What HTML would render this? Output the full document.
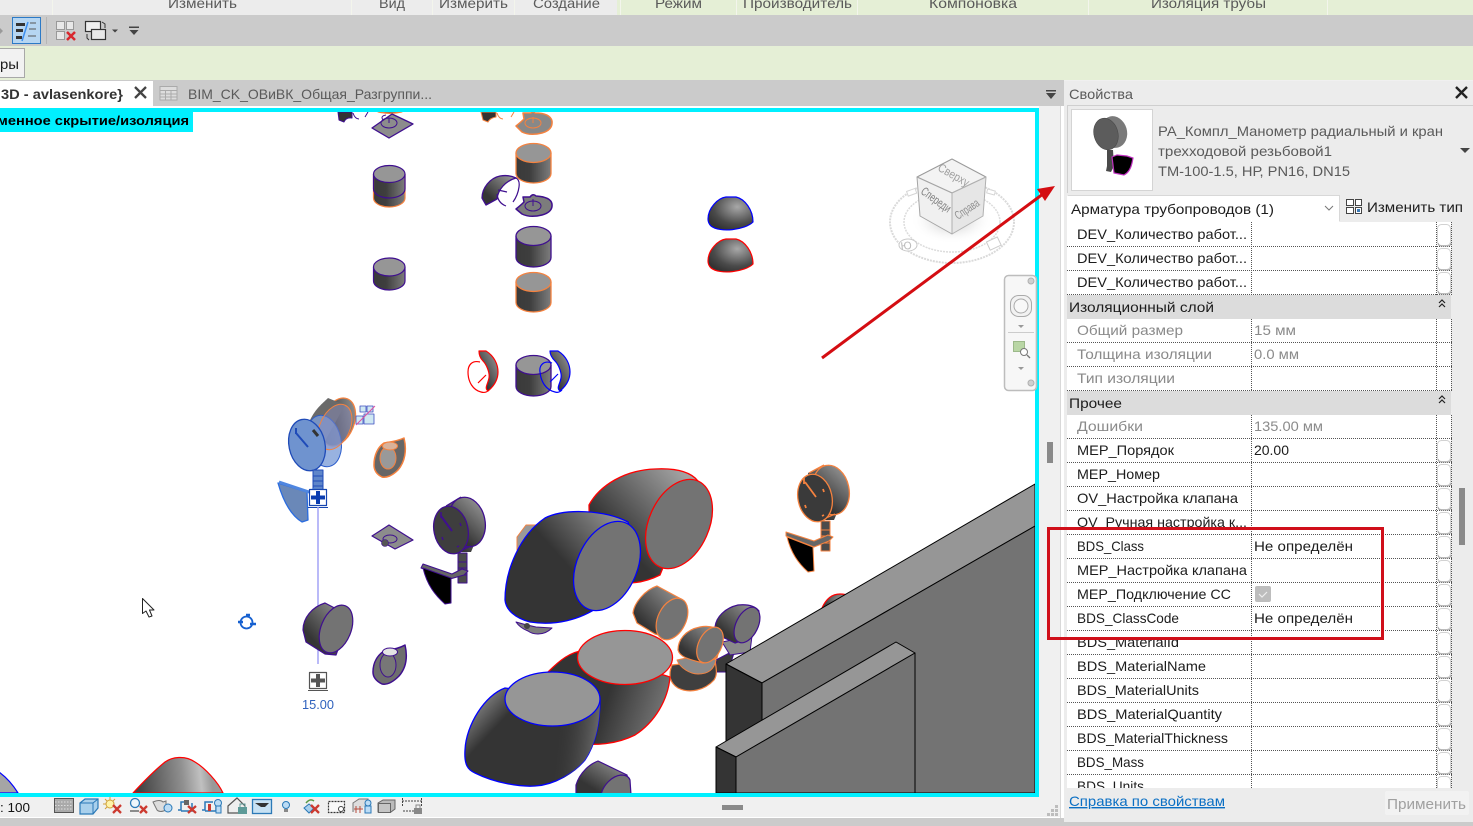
<!DOCTYPE html>
<html lang="ru"><head><meta charset="utf-8"><title>Свойства</title>
<style>
html,body{margin:0;padding:0;background:#fff;overflow:hidden}
svg{display:block}
text{font-family:"Liberation Sans","Noto Sans CJK SC",sans-serif;font-size:14px;fill:#1c1c1c}
.r{fill:#5a5a5a}.g{fill:#8a8a8a}
</style></head><body>
<svg width="1473" height="826" viewBox="0 0 1473 826" xmlns="http://www.w3.org/2000/svg">
<defs>
<linearGradient id="cy" x1="0" x2="1" y1="0" y2="0"><stop offset="0" stop-color="#3a3a3a"/><stop offset=".4" stop-color="#3e3e3e"/><stop offset="1" stop-color="#7d7d7d"/></linearGradient>
<linearGradient id="ti" x1="0" x2="1" y1="1" y2="0"><stop offset=".25" stop-color="#353535"/><stop offset="1" stop-color="#a0a0a0"/></linearGradient>
<linearGradient id="bb" gradientUnits="userSpaceOnUse" x1="530" y1="600" x2="625" y2="515"><stop offset=".4" stop-color="#343434"/><stop offset="1" stop-color="#9a9a9a"/></linearGradient>
<linearGradient id="br" gradientUnits="userSpaceOnUse" x1="605" y1="540" x2="680" y2="470"><stop offset=".1" stop-color="#343434"/><stop offset="1" stop-color="#a2a2a2"/></linearGradient>
<linearGradient id="lr" gradientUnits="userSpaceOnUse" x1="590" y1="700" x2="665" y2="725"><stop offset=".2" stop-color="#343434"/><stop offset="1" stop-color="#7a7a7a"/></linearGradient>
<linearGradient id="lo" gradientUnits="userSpaceOnUse" x1="555" y1="740" x2="600" y2="745"><stop offset="0" stop-color="#343434" stop-opacity="0"/><stop offset="1" stop-color="#707070"/></linearGradient>
<linearGradient id="lb2" gradientUnits="userSpaceOnUse" x1="510" y1="725" x2="478" y2="695"><stop offset=".2" stop-color="#343434"/><stop offset="1" stop-color="#8d8d8d"/></linearGradient>
<radialGradient id="do" cx=".65" cy=".3" r=".75"><stop offset="0" stop-color="#a8a8a8"/><stop offset=".7" stop-color="#4a4a4a"/><stop offset="1" stop-color="#333"/></radialGradient>
<linearGradient id="dr" gradientUnits="userSpaceOnUse" x1="140" y1="790" x2="212" y2="782"><stop offset="0" stop-color="#444"/><stop offset=".6" stop-color="#909090"/><stop offset=".85" stop-color="#c0c0c0"/><stop offset="1" stop-color="#999"/></linearGradient>
<radialGradient id="sh" cx=".5" cy=".5" r=".5"><stop offset="0" stop-color="#bdbdbd"/><stop offset="1" stop-color="#fff" stop-opacity="0"/></radialGradient>
<clipPath id="vp"><rect x="0" y="112" width="1035" height="681"/></clipPath>
<clipPath id="tb"><rect x="1067" y="222" width="385" height="566"/></clipPath>
<g id="bt"><rect x="1437.500" y="1.500" width="13" height="21" rx="4" fill="#fff" stroke="#d2d2d2"/><path d="M1438 20q0 3 4 3h5q4 0 4-3" fill="none" stroke="#a5a5a5"/></g>
</defs>

<!-- chrome -->
<rect width="1473" height="826" fill="#f0f0f0"/>
<rect y="0" width="617" height="15" fill="#ececec"/>
<rect x="617" y="0" width="856" height="15" fill="#e5efd6"/>
<path d="M52.500 0V15M351.500 0V15M432.500 0V15M514.500 0V15M620.500 0V15M736.500 0V15M857.500 0V15M1088.500 0V15M1327.500 0V15" stroke="#f3f5ec"/>
<text class="r" x="168" y="8" textLength="69" lengthAdjust="spacingAndGlyphs">Изменить</text>
<text class="r" x="379" y="8" textLength="26" lengthAdjust="spacingAndGlyphs">Вид</text>
<text class="r" x="439" y="8" textLength="69" lengthAdjust="spacingAndGlyphs">Измерить</text>
<text class="r" x="533" y="8" textLength="67" lengthAdjust="spacingAndGlyphs">Создание</text>
<text class="r" x="655" y="8" textLength="47" lengthAdjust="spacingAndGlyphs">Режим</text>
<text class="r" x="743" y="8" textLength="109" lengthAdjust="spacingAndGlyphs">Производитель</text>
<text class="r" x="929" y="8" textLength="88" lengthAdjust="spacingAndGlyphs">Компоновка</text>
<text class="r" x="1151" y="8" textLength="115" lengthAdjust="spacingAndGlyphs">Изоляция трубы</text>
<rect y="15" width="1473" height="31" fill="#cbcbcb"/>
<rect y="46" width="1473" height="34" fill="#e5efd6"/>
<rect x="-2" y="48.500" width="26.500" height="29" fill="#f2f2f2" stroke="#a8a8a8"/>
<text x="0" y="69" textLength="19" lengthAdjust="spacingAndGlyphs">ры</text>
<!-- toolbar icons -->
<path d="M0 28l3 3-3 3z" fill="#999"/>
<rect x="12.500" y="17.500" width="28" height="26" fill="#b6d6f2" stroke="#2c7ac6"/>
<path d="M16 23h9v3h-9zM16 29h7v3h-7zM16 36h6v3h-6z" fill="#333"/><path d="M30 23h6M29 29h7M28 36h8" stroke="#555"/><path d="M28 22l-6 19" stroke="#3c8ff0" stroke-width="1.500"/>
<path d="M46.500 17V44" stroke="#b5b5b5"/>
<rect x="56.500" y="21.500" width="8" height="8" fill="#e8e8e8" stroke="#999"/><rect x="66.500" y="21.500" width="7" height="8" fill="#e8e8e8" stroke="#999"/><rect x="56.500" y="31.500" width="8" height="8" fill="#e8e8e8" stroke="#999"/>
<path d="M67 32l8 8M75 32l-8 8" stroke="#d9272e" stroke-width="2.500"/>
<rect x="85.500" y="21.500" width="15" height="10" fill="#eee" stroke="#333" stroke-width="1.200"/><rect x="91.500" y="29.500" width="14" height="10" fill="#e8e8e8" stroke="#333" stroke-width="1.200"/>
<path d="M102 22l3 2v4M87 34v4l2 2" fill="none" stroke="#333"/>
<path d="M112 29.500h6l-3 3zM129 26.500h10v1.500h-10zM129.500 30h9l-4.500 5z" fill="#444"/>

<!-- tabs -->
<rect y="80" width="1064" height="26" fill="#cbcbcb"/>
<rect y="81" width="153" height="25" fill="#fff"/>
<text x="1" y="99" textLength="122" lengthAdjust="spacingAndGlyphs" style="font-weight:bold;fill:#333">3D - avlasenkore}</text>
<path d="M135 87l11 11M146 87l-11 11" stroke="#444" stroke-width="2.300"/>
<rect x="160" y="86.500" width="17" height="13.500" fill="#ddd" stroke="#aaa"/><path d="M160 90.500h17M160 94h17M160 97h17M165.500 90v10M171 90v10" stroke="#aaa"/>
<text class="r" x="188" y="99" textLength="244" lengthAdjust="spacingAndGlyphs">BIM_CK_ОВиВК_Общая_Разгруппи...</text>
<path d="M1046 90h10v1.500h-10zM1046 93h10l-5 6z" fill="#444"/>

<!-- viewport -->
<rect x="0" y="106" width="1061" height="2" fill="#fff"/>
<rect x="1039" y="106" width="22" height="692" fill="#f0f0f0"/>
<rect x="0" y="112" width="1035" height="681" fill="#fff"/>
<rect x="1047" y="442" width="6" height="21" fill="#8a8a8a"/>
<g clip-path="url(#vp)" stroke-linejoin="round">
<!-- top fragments -->
<path d="M338 112h14v6q-6-1-8 4l-5-2z" fill="#333" stroke="#3f0f8f"/><path d="M353 113q2 6 6 6M368 112l-3 5" fill="none" stroke="#3f0f8f"/>
<path d="M481 112h15v5q-6 1-8 5l-5-2z" fill="#333" stroke="#f5823f"/><path d="M497 113q2 6 6 6M514 112l-3 5" fill="none" stroke="#f5823f"/>
<path d="M378 112q12 3 24 0z" fill="#555" stroke="#f5823f"/>
<path d="M372 128l20-14 21 10-24 14z" fill="#8c8c8c" stroke="#3f0f8f" stroke-width="1.300"/><ellipse cx="389" cy="123" rx="8" ry="5" fill="none" stroke="#3f0f8f"/><path d="M389 118v5M383 120q-3-4 3-5" fill="none" stroke="#3f0f8f"/>
<path d="M516 126q5-4 8-7l-1-6h8q2-2 4 0 15 0 17 8 1 9-10 12-12 3-20-1z" fill="#888" stroke="#f5823f" stroke-width="1.500"/><ellipse cx="533" cy="123" rx="8" ry="5" fill="none" stroke="#f5823f"/><path d="M533 117v6" stroke="#f5823f"/>
<path d="M516 209q5-4 8-7l-1-5h7q3-4 6-1 15 1 16 8 1 8-10 11-12 3-20-1z" fill="#7c7c7c" stroke="#3f0f8f" stroke-width="1.500"/><ellipse cx="533" cy="206" rx="8" ry="5" fill="none" stroke="#3f0f8f"/><path d="M533 199v7" stroke="#3f0f8f"/>
<!-- halves -->
<path d="M486 205l-4-7C482 188 490 178 500 176 506 175 512 176 516 178 505 181 498 190 497 199Z" fill="url(#ti)" stroke="#3f0f8f" stroke-width="1.300"/>
<path d="M516 178q4 2 3 9-1 8-6 15M506 206q-8-3-9-12M498 190l9 2" fill="none" stroke="#3f0f8f" stroke-width="1.200"/>
<!-- cylinders -->
<path d="M373.500 174V198A15.750 9 0 0 0 405 198V174Z" fill="url(#cy)" stroke="#f5823f" stroke-width="1.200"/>
<path d="M373.500 174V189A15.750 9 0 0 0 405 189V174" fill="none" stroke="#3f0f8f" stroke-width="1.200"/>
<ellipse cx="389.250" cy="174" rx="15.750" ry="8.500" fill="#969696" stroke="#3f0f8f" stroke-width="1.200"/>
<path d="M373.500 267V281A15.750 9 0 0 0 405 281V267Z" fill="url(#cy)" stroke="#3f0f8f" stroke-width="1.200"/><ellipse cx="389.250" cy="267" rx="15.750" ry="9" fill="#969696" stroke="#3f0f8f" stroke-width="1.200"/>
<path d="M516 153V173.500A17.500 9.500 0 0 0 551 173.500V153Z" fill="url(#cy)" stroke="#f5823f" stroke-width="1.300"/><ellipse cx="533.500" cy="153" rx="17.500" ry="9.500" fill="#969696" stroke="#f5823f" stroke-width="1.300"/>
<path d="M516 236V257.500A17.500 9.500 0 0 0 551 257.500V236Z" fill="url(#cy)" stroke="#3f0f8f" stroke-width="1.300"/><ellipse cx="533.500" cy="236" rx="17.500" ry="9.500" fill="#969696" stroke="#3f0f8f" stroke-width="1.300"/>
<path d="M516 282V302.500A17.500 9.500 0 0 0 551 302.500V282Z" fill="url(#cy)" stroke="#f5823f" stroke-width="1.300"/><ellipse cx="533.500" cy="282" rx="17.500" ry="9.500" fill="#969696" stroke="#f5823f" stroke-width="1.300"/>
<path d="M516 365V386.500A17.500 9.500 0 0 0 551 386.500V365Z" fill="url(#cy)" stroke="#3f0f8f" stroke-width="1.300"/><ellipse cx="533.500" cy="365" rx="17.500" ry="9.500" fill="#969696" stroke="#3f0f8f" stroke-width="1.300"/>
<!-- crescents -->
<path d="M479 351h7C494 356 498 364 498 372 498 380 494 386 488 391 484 388 488 384 489 378 490 372 486 364 483 361 480 358 479 355 479 351Z" fill="url(#ti)" stroke="#f00" stroke-width="1.200"/>
<path d="M480 362C472 360 468 365 468 372 468 382 473 390 481 392 484 393 487 392 489 390M478 383l8-8" fill="none" stroke="#f00" stroke-width="1.200"/>
<path d="M550 351h8C566 356 570 364 570 372 570 380 566 386 560 391 556 388 560 384 561 378 562 372 558 364 555 361 552 358 550 355 550 351Z" fill="url(#ti)" stroke="#00f" stroke-width="1.200"/>
<path d="M552 363C544 360 539 365 540 372 541 382 546 390 555 392 558 393 560 392 562 390M550 382l8-8" fill="none" stroke="#00f" stroke-width="1.200"/>
<!-- domes -->
<path d="M708 219C708 208 718 198 726 197L736 197C745 199 753 210 753 222 745 230 720 233 711 226 709 224 708 222 708 219Z" fill="url(#do)" stroke="#00f" stroke-width="1.200"/>
<path d="M708 261C708 250 718 240 726 239L736 239C745 241 753 252 753 264 745 272 720 275 711 268 709 266 708 264 708 261Z" fill="url(#do)" stroke="#f00" stroke-width="1.200"/>
<!-- selected manometer -->
<ellipse cx="338" cy="422" rx="16" ry="25" transform="rotate(22 338 422)" fill="url(#ti)" stroke="#f5823f" stroke-width="1.300"/>
<path d="M310 420C316 408 322 404 328 398L345 405 320 450Z" fill="#6a6a6a"/>
<ellipse cx="324" cy="441" rx="17" ry="26" transform="rotate(-12 324 441)" fill="#7e9fd8" fill-opacity=".8" stroke="#2a5ccc"/>
<ellipse cx="335" cy="427" rx="15" ry="24" transform="rotate(25 335 427)" fill="#8a8ec0" fill-opacity=".45" stroke="#f5823f"/>
<ellipse cx="307" cy="445" rx="18" ry="26" transform="rotate(-12 307 445)" fill="#6f93cf" stroke="#1f4bb8" stroke-width="1.300"/>
<path d="M296 433l12 14M296 428v6" stroke="#1f4bb8" stroke-width="2"/><path d="M313 430l5 6" stroke="#333" stroke-width="3"/>
<path d="M313 470h10v20h-10z" fill="#5f86c9" stroke="#1f4bb8"/><path d="M313 476h10M313 481h10M313 486h10" stroke="#1f4bb8"/>
<path d="M278 483l29 9 1 28-6 2C292 516 284 504 278 483Z" fill="#6a88b8" stroke="#2a6ce0" stroke-width="1.300"/>
<path d="M279 482l30 10 6-3" fill="none" stroke="#4f86e0" stroke-width="3"/>
<rect x="309.500" y="489.500" width="17" height="16" fill="#fff" stroke="#1746b0" stroke-width="1.200"/><path d="M318 491v13M311 497.500h14" stroke="#0a3cb0" stroke-width="4"/><path d="M308 507.500h20" stroke="#1746b0"/>
<path d="M318 507V664" stroke="#a3a3f5" stroke-width="1.500"/>
<rect x="309.500" y="672.500" width="17" height="16" fill="#fff" stroke="#555" stroke-width="1.200"/><path d="M318 674v13M311 680.500h14" stroke="#555" stroke-width="4"/><path d="M308 690.500h20" stroke="#555"/>
<text x="302" y="709" textLength="32" lengthAdjust="spacingAndGlyphs" style="font-size:13px;fill:#2f62bd">15.00</text>
<g stroke="#3e4fc0" fill="#cfe8f2" stroke-width=".8"><rect x="360" y="406" width="6" height="6"/><rect x="367" y="406" width="6" height="6"/><rect x="356" y="416" width="7" height="8"/><rect x="364" y="414" width="10" height="10"/></g><path d="M356 425l19-19" stroke="#e050a0"/>
<!-- orange plate -->
<path d="M374 465C374 455 378 447 384 443 390 442 398 441 404 438 407 450 405 462 398 470 392 476 386 478 382 477 376 474 374 470 374 465Z" fill="#666" stroke="#f5823f" stroke-width="1.500"/>
<ellipse cx="388" cy="458" rx="8" ry="11" fill="#999" stroke="#f5823f"/><ellipse cx="390" cy="446" rx="7.500" ry="4" fill="#d9b29a" stroke="#f5823f"/>
<!-- diamond 2 -->
<path d="M372 536l17-11 24 15-18 9z" fill="#8c8c8c" stroke="#3f0f8f" stroke-width="1.200"/><ellipse cx="390" cy="539" rx="7" ry="4" fill="none" stroke="#3f0f8f"/><circle cx="385" cy="543" r="3.500" fill="#555" stroke="#3f0f8f" stroke-width=".6"/>
<!-- purple manometer -->
<path d="M445 507L461 497 484 522 471 552 451 552Z" fill="url(#ti)"/>
<ellipse cx="467" cy="522" rx="18" ry="25" transform="rotate(-12 467 522)" fill="url(#ti)" stroke="#3f0f8f" stroke-width="1.300"/>
<path d="M446 506L461 497M455 553L471 546" stroke="#3f0f8f" stroke-width="1.300"/>
<ellipse cx="451" cy="530" rx="17" ry="24" transform="rotate(-12 451 530)" fill="#3e3e3e" stroke="#3f0f8f" stroke-width="1.300"/>
<path d="M441 516l11 15" stroke="#3f0f8f" stroke-width="2"/><path d="M441 512v6M460 523l1 3M442 537l1 3M457 547l2-1" stroke="#3f0f8f" stroke-width="1.500"/>
<path d="M458 553h9v30h-9z" fill="#4b4b4b" stroke="#3f0f8f"/><path d="M458 562h9M458 568h9M458 575h9" stroke="#3f0f8f"/>
<path d="M423 564l29 10 10-5 6 2-4 4-14 4-29-11z" fill="#666" stroke="#3f0f8f"/>
<path d="M423 568L451 578V603L445 604C435 595 427 585 423 568Z" fill="#000" stroke="#3f0f8f"/>
<!-- purple tilted cylinder -->
<path d="M303 630C303 618 312 607 325 603L350 616 336 655 325 654 306 642Z" fill="url(#ti)" stroke="#3f0f8f" stroke-width="1.200"/>
<ellipse cx="336" cy="629" rx="15" ry="25" transform="rotate(22 336 629)" fill="#737373" stroke="#3f0f8f" stroke-width="1.200"/>
<path d="M373 672C373 662 378 655 384 651 390 650 398 649 405 645 408 658 406 668 399 676 393 682 387 685 382 684 376 681 373 677 373 672Z" fill="#6e6e6e" stroke="#3f0f8f" stroke-width="1.500"/>
<ellipse cx="388" cy="665" rx="8" ry="12" fill="#777" stroke="#3f0f8f"/><ellipse cx="390" cy="652" rx="7.500" ry="4" fill="#e4e4e4" stroke="#3f0f8f"/>
<!-- orange manometer -->
<path d="M808 473L824 465 847 490 834 520 815 520Z" fill="url(#ti)"/>
<ellipse cx="831" cy="490" rx="18" ry="25" transform="rotate(-12 831 490)" fill="url(#ti)" stroke="#f5823f" stroke-width="1.300"/>
<path d="M809 473L824 465M819 521L835 514" stroke="#f5823f" stroke-width="1.300"/>
<ellipse cx="815" cy="498" rx="17" ry="24" transform="rotate(-12 815 498)" fill="#3a3a3a" stroke="#f5823f" stroke-width="1.300"/>
<path d="M805 482l11 15M804 478v6M823 489l1 3M805 505l1 3M822 516l2-1" stroke="#f5823f" stroke-width="1.800"/>
<path d="M821 521h9v30h-9z" fill="#4b4b4b" stroke="#f5823f"/><path d="M821 530h9M821 536h9M821 543h9" stroke="#f5823f"/>
<path d="M786 532l28 9 14-6 5 2-4 4-15 6-28-11z" fill="#666" stroke="#f5823f"/>
<path d="M787 537L813 547 814 571 808 572C798 563 791 553 787 537Z" fill="#000" stroke="#f5823f"/>
<!-- small red dome behind wall -->
<path d="M822 608C826 599 832 594 840 594 848 594 853 597 856 601L826 612Z" fill="url(#do)" stroke="#f00" stroke-width="1.200"/>
<!-- orange piece behind blue & purple plate -->
<path d="M517 537V550L530 535 540 525 526 525Z" fill="#999" stroke="#f5823f"/>
<path d="M516 622q10 3 20 5l16 1q-6 6-14 6-6 0-10-3-8-3-12-9z" fill="#7e7e7e" stroke="#3f0f8f"/><circle cx="527" cy="626" r="3" fill="#444"/>
<!-- big red elbow -->
<path d="M589 505C600 485 625 470 655 469 675 468 690 471 698 481L660 575C650 580 640 583 628 583L590 560Z" fill="url(#br)" stroke="#f00" stroke-width="1.300"/>
<ellipse cx="679" cy="524" rx="30" ry="47" transform="rotate(24 679 524)" fill="#737373" stroke="#f00" stroke-width="1.300"/>
<!-- big blue elbow -->
<path d="M505 600C505 570 520 535 545 518 565 508 605 510 628 522L640 560 600 606C580 620 555 626 530 622 515 618 506 610 505 600Z" fill="url(#bb)" stroke="#00f" stroke-width="1.300"/>
<ellipse cx="607" cy="566" rx="30" ry="47" transform="rotate(24 607 566)" fill="#737373" stroke="#00f" stroke-width="1.300"/>
<!-- small orange cylinder -->
<path d="M633 613C634 603 645 590 657 586L683 600 670 638 655 634 637 623Z" fill="url(#ti)" stroke="#f5823f" stroke-width="1.200"/>
<ellipse cx="672" cy="619" rx="14" ry="22" transform="rotate(26 672 619)" fill="#737373" stroke="#f5823f" stroke-width="1.200"/>
<!-- purple elbow -->
<path d="M716 660L735 650 728 672 716 672Z" fill="#3a3a3a" stroke="#3f0f8f"/>
<path d="M722 642L752 636 750 652 730 655Z" fill="#8a8a8a" stroke="#3f0f8f"/>
<path d="M715 627C716 617 725 608 738 605 748 604 755 606 759 611L752 637 735 643 720 636Z" fill="url(#ti)" stroke="#3f0f8f" stroke-width="1.200"/>
<ellipse cx="747" cy="625" rx="11" ry="19" transform="rotate(26 747 625)" fill="#737373" stroke="#3f0f8f" stroke-width="1.200"/>
<!-- orange elbow + disc -->
<path d="M672 665C668 675 670 683 678 688 690 694 705 690 714 680 718 674 716 668 715 660Z" fill="#3f3f3f" stroke="#f5823f" stroke-width="1.200"/>
<path d="M677 660C680 668 690 674 698 674 708 674 714 670 716 660L700 655Z" fill="#8a8a8a" stroke="#f5823f"/>
<path d="M678 650C678 640 685 630 700 627 710 625 720 628 723 635L717 658 703 663C692 660 680 658 678 650Z" fill="url(#ti)" stroke="#f5823f" stroke-width="1.200"/>
<ellipse cx="710" cy="645" rx="11.500" ry="19" transform="rotate(26 710 645)" fill="#737373" stroke="#f5823f" stroke-width="1.200"/>
<!-- bottom red -->
<path d="M548 672C560 660 570 652 585 650L670 677C668 700 655 722 635 735 615 745 595 745 580 744Z" fill="url(#lr)" stroke="#f00" stroke-width="1.300"/>
<ellipse cx="625" cy="657.500" rx="47.500" ry="27" fill="#969696" stroke="#f00" stroke-width="1.300"/>
<!-- bottom blue -->
<path d="M505 688C485 695 466 725 465 750 464 765 468 770 475 773 495 783 520 787 535 786 555 785 575 772 585 760 595 745 600 725 600 700Z" fill="url(#lb2)" stroke="#00f" stroke-width="1.300"/>
<path d="M555 720L600 700C600 725 595 745 585 760 575 772 565 778 555 782Z" fill="url(#lo)"/>
<ellipse cx="552.500" cy="699" rx="47.500" ry="27" fill="#969696" stroke="#00f" stroke-width="1.300"/>
<!-- bottom purple cyl -->
<path d="M576 795V785C580 772 590 764 598 761L627 775 631 795Z" fill="url(#ti)" stroke="#3f0f8f" stroke-width="1.200"/>
<path d="M601 795C603 785 612 776 621 775 626 775 629 777 630 780L631 795" fill="#737373" stroke="#3f0f8f" stroke-width="1.200"/>
<!-- walls -->
<path d="M726 664L1035 484V526L762 683Z" fill="#969696" stroke="#000"/>
<path d="M762 683L1035 526V793H762Z" fill="#737373" stroke="#000"/>
<path d="M726 664L762 683V793H726Z" fill="#343434" stroke="#000"/>
<path d="M716 747L896 642L915 653L736 757Z" fill="#969696" stroke="#000"/>
<path d="M736 757L915 653V793H736Z" fill="#737373" stroke="#000"/>
<path d="M716 747L736 757V793H716Z" fill="#343434" stroke="#000"/>
<!-- bottom-left domes -->
<path d="M133 793C145 780 155 770 165 762 172 757 185 755 195 762 205 768 218 782 223 793Z" fill="url(#dr)" stroke="#f00" stroke-width="1.200"/>
<path d="M-1 772Q10 780 18 793H-1Z" fill="#a5a5a5" stroke="#00f" stroke-width="1.200"/>
<!-- cursor -->
<path d="M142.500 598.500v15l3.500-2.500 3 6 3-1-2.500-6h4.500z" fill="#fff" stroke="#222"/>
<!-- rotate icon -->
<circle cx="246.500" cy="622.500" r="6" fill="none" stroke="#1660d0" stroke-width="1.800"/><path d="M238 622h5M250 624h6M246 615h4" stroke="#1660d0" stroke-width="2.500"/>
<!-- viewcube -->
<ellipse cx="952" cy="222" rx="62" ry="41" fill="none" stroke="#dadada" stroke-dasharray="2 1" stroke-width="2"/>
<ellipse cx="952" cy="222" rx="48" ry="30" fill="#fff" stroke="#dcdcdc" stroke-dasharray="2 1" stroke-width="1.500"/>
<ellipse cx="952" cy="220" rx="42" ry="24" fill="url(#sh)"/>
<path d="M952 159L986 177 952 193 917 177Z" fill="#f3f3f3" stroke="#9a9a9a"/>
<path d="M917 177L952 193V234L920 216Z" fill="#f0f0f0" stroke="#a5a5a5"/>
<path d="M952 193L986 177 983 216 952 234Z" fill="#e6e6e6" stroke="#b0b0b0"/>
<text transform="translate(937,170) rotate(30)" style="font-size:12px;fill:#a0a0a0" textLength="34" lengthAdjust="spacingAndGlyphs">Сверху</text>
<text transform="translate(920,193) rotate(36)" style="font-size:12px;fill:#808080" textLength="34" lengthAdjust="spacingAndGlyphs">Спереди</text>
<text transform="translate(958,220) rotate(-34)" style="font-size:12px;fill:#909090" textLength="27" lengthAdjust="spacingAndGlyphs">Справа</text>
<ellipse cx="908" cy="245" rx="9" ry="6" fill="#fff" stroke="#c8c8c8"/><text x="901" y="250" style="font-size:11px;fill:#bbb" transform="rotate(-6 901 250)">Ю</text>
<rect x="988" y="239" width="12" height="9" transform="rotate(-25 994 244)" fill="#fff" stroke="#ccc"/>
<rect x="907" y="190" width="9" height="5" transform="rotate(-20 911 192)" fill="#fff" stroke="#d5d5d5"/>
<rect x="987" y="190" width="8" height="4" transform="rotate(15 991 192)" fill="#fff" stroke="#d5d5d5"/>
</g>
<!-- cyan frame -->
<rect x="0" y="108" width="1039" height="4" fill="#00f0ff"/>
<rect x="1035" y="108" width="4" height="689" fill="#00f0ff"/>
<rect x="0" y="793" width="1039" height="4" fill="#00f0ff"/>
<rect x="0" y="112" width="193" height="20" fill="#00f0ff"/>
<text x="-3" y="125" textLength="192" lengthAdjust="spacingAndGlyphs" style="font-weight:bold;font-size:13px;fill:#000">менное скрытие/изоляция</text>
<!-- nav bar -->
<rect x="1004.500" y="275.500" width="32" height="115" rx="4" fill="#f6f6f6" fill-opacity=".92" stroke="#bdbdbd" stroke-width="1.500"/>
<circle cx="1031" cy="281" r="3" fill="#d0d0d0" stroke="#b0b0b0"/>
<circle cx="1031" cy="383" r="3" fill="#d0d0d0" stroke="#b0b0b0"/>
<rect x="1010.500" y="295.500" width="21" height="21" rx="8" fill="#f2f2f2" stroke="#aaa"/><circle cx="1021" cy="306" r="7" fill="#f8f8f8" stroke="#aaa"/>
<path d="M1018 325h6l-3 3z" fill="#999"/><path d="M1008 332.500h26" stroke="#ccc"/>
<rect x="1013.500" y="341.500" width="11" height="10" fill="#b9d6a5" stroke="#9cb98a"/><circle cx="1024" cy="352" r="3.500" fill="#fff" stroke="#777"/><path d="M1027 355l3 3" stroke="#777" stroke-width="1.300"/>
<path d="M1018 367h6l-3 3z" fill="#999"/>

<!-- status bar -->
<rect x="0" y="797" width="1061" height="21" fill="#f0f0f0"/>
<rect x="0" y="818" width="1473" height="8" fill="#cbcbcb"/>
<rect x="0" y="817" width="1064" height="1" fill="#fff"/>
<text x="0" y="812" textLength="30" lengthAdjust="spacingAndGlyphs" style="font-size:13px;fill:#111">: 100</text>
<rect x="54.500" y="798.500" width="19" height="14" fill="#aaa" stroke="#555"/><path d="M55 802h18M55 805.500h18M55 809h18" stroke="#ddd" stroke-dasharray="1.500 1.500"/>
<path d="M80 803l5-4h13v9l-5 6H80z" fill="#a9d0ec" stroke="#2b79b7" stroke-width="1.200"/><path d="M80 803h13v11M93 803l5-4" fill="none" stroke="#2b79b7"/>
<circle cx="110" cy="804" r="4" fill="#fff3a8" stroke="#d0a13a"/><path d="M110 797v3M103 804h3M105 799l2 2M115 799l-2 2M105 809l2-2" stroke="#d0a13a"/><path d="M113 805l8 8M121 805l-8 8" stroke="#cc3a30" stroke-width="2.300"/>
<circle cx="135" cy="803" r="4.500" fill="#eef6fb" stroke="#2b79b7" stroke-width="1.300"/><path d="M130 811h9" stroke="#555" stroke-width="1.300"/><path d="M140 806l7 7M147 806l-7 7" stroke="#cc3a30" stroke-width="2.300"/>
<path d="M153 802q7-3 10 0l3-1v9q-6 3-9 0z" fill="#ddd" stroke="#777"/><circle cx="168" cy="808" r="4" fill="#bcdcf5" stroke="#2b79b7"/>
<path d="M178 810h3v-8h8M192 803v8h-11" fill="none" stroke="#2b79b7" stroke-width="1.500"/><rect x="184" y="800" width="5" height="5" fill="#666"/><path d="M188 806l8 7M196 806l-8 7" stroke="#cc3a30" stroke-width="2.300"/>
<path d="M202 810h3v-8h8M216 803v8h-11" fill="none" stroke="#2b79b7" stroke-width="1.500"/><path d="M208 804h3v7h-3z" fill="#cc3a30"/><circle cx="218" cy="803" r="3.500" fill="#bcdcf5" stroke="#2b79b7"/><rect x="216" y="806" width="5" height="7" fill="#bcdcf5" stroke="#2b79b7"/>
<path d="M228 806l9-8 8 8v7h-17z" fill="#eee" stroke="#555" stroke-width="1.200"/><rect x="238" y="807" width="9" height="7" fill="#5d9a98"/><path d="M240 807v-3h5v3" fill="none" stroke="#5d9a98"/>
<rect x="252.500" y="799.500" width="19" height="14" fill="#c7e1f3" stroke="#2b79b7" stroke-width="1.300"/><path d="M255 803h14l-4 4h-4l-3-2z" fill="#333"/>
<circle cx="286" cy="805" r="3.500" fill="#bcdcf5" stroke="#2b79b7"/><path d="M284 809h4v3h-4z" fill="#888"/>
<path d="M304 808l5-4 5 4-5 5z" fill="#a9d0ec" stroke="#2b79b7"/><path d="M306 803q4-5 8-2" fill="none" stroke="#5a9a45" stroke-width="1.500"/><path d="M311 805l8 8M319 805l-8 8" stroke="#cc3a30" stroke-width="2.300"/>
<rect x="328.500" y="801.500" width="16" height="11" fill="#f8f8f8" stroke="#333" stroke-width="1.200" stroke-dasharray="2 1"/><circle cx="341" cy="809" r="2.500" fill="#fff" stroke="#444"/>
<path d="M353 812v-9l6-4h9v6" fill="#ddd" stroke="#777"/><path d="M356 806v7M360 806v7M354 809h9" stroke="#b84d3e"/><circle cx="368" cy="803" r="3" fill="#bcdcf5" stroke="#2b79b7"/><rect x="365" y="806" width="6" height="7" fill="#bcdcf5" stroke="#2b79b7"/>
<path d="M378 803l5-3h12v9l-4 3h-13z" fill="#bbb" stroke="#666"/><rect x="378.500" y="803.500" width="12" height="9" fill="#c5c5c5" stroke="#666"/>
<path d="M402.500 798v8M421.500 798v8M402 801h20M403 811h12" stroke="#444" stroke-dasharray="2 1"/><rect x="414" y="808" width="8" height="6" fill="#888"/><path d="M416 808v-3h4v3" fill="none" stroke="#888"/>
<rect x="722" y="805" width="21" height="5" fill="#8a8a8a"/>
<path d="M1055 805h3v3h-3zM1051 809h3v3h-3zM1055 809h3v3h-3zM1047 813h3v3h-3zM1051 813h3v3h-3zM1055 813h3v3h-3z" fill="#bdbdbd"/>
<path d="M1060.500 106V818" stroke="#d8d8d8"/><rect x="1061" y="106" width="3" height="712" fill="#fff"/>

<!-- properties panel -->
<rect x="1064" y="81" width="409" height="741" fill="#ececec"/>
<rect x="1064" y="822" width="409" height="4" fill="#cbcbcb"/>
<text x="1069" y="99" textLength="64" lengthAdjust="spacingAndGlyphs" class="r">Свойства</text>
<path d="M1456 87l11 11M1467 87l-11 11" stroke="#222" stroke-width="2.400"/>
<path d="M1067.500 193V105.500H1473" fill="none" stroke="#cfcfcf"/>
<rect x="1071.500" y="109.500" width="81" height="81" fill="#fff" stroke="#d4d4d4"/>
<ellipse cx="1114" cy="132" rx="13" ry="16" transform="rotate(-15 1114 132)" fill="#7a7a7a"/>
<ellipse cx="1106" cy="134" rx="12" ry="16" transform="rotate(-15 1106 134)" fill="#5c5c5c" stroke="#4a4a4a" stroke-width=".6"/>
<path d="M1107 150h6l1 16-3 6-5-1 1-5z" fill="#4a4a4a"/><path d="M1112 157l5-2 10 1 6 2-1 5q-2 9-8 12l-10-2z" fill="#000" stroke="#c030c0" stroke-width="1.200"/>
<text x="1158" y="136" textLength="285" lengthAdjust="spacingAndGlyphs" class="r">РА_Компл_Манометр радиальный и кран</text>
<text x="1158" y="156" textLength="174" lengthAdjust="spacingAndGlyphs" class="r">трехходовой резьбовой1</text>
<text x="1158" y="176" textLength="192" lengthAdjust="spacingAndGlyphs" class="r">ТМ-100-1.5, НР, PN16, DN15</text>
<path d="M1460 148h10l-5 5z" fill="#444"/>
<rect x="1067" y="195" width="273" height="27" fill="#fff"/><path d="M1067.500 195.500H1339.500V221.500" fill="none" stroke="#d8d8d8"/>
<text x="1071" y="214" textLength="203" lengthAdjust="spacingAndGlyphs">Арматура трубопроводов (1)</text>
<path d="M1325 206l4 4 4-4" fill="none" stroke="#777"/>
<path d="M1346.500 199.500h7v6h-7zM1355.500 199.500h6v6h-6zM1346.500 207.500h7v6h-7zM1355.500 207.500h6v6h-6z" fill="#fff" stroke="#444"/><path d="M1357 209h3v3h-3z" fill="#3a7ab8"/>
<text x="1367" y="212" textLength="96" lengthAdjust="spacingAndGlyphs">Изменить тип</text>

<!-- table -->
<rect x="1067" y="222" width="384" height="566" fill="#fff"/>
<rect x="1067" y="295" width="384" height="24" fill="#dcdcdc"/>
<rect x="1067" y="391" width="384" height="24" fill="#dcdcdc"/>
<path d="M1251.500 222V295M1436.500 222V295M1451.500 222V295M1251.500 319V391M1436.500 319V391M1451.500 319V391M1251.500 415V788M1436.500 415V788M1451.500 415V788" stroke="#555" stroke-dasharray="1 1"/>
<path d="M1067 246.500H1452M1067 270.500H1452M1067 294.500H1452M1067 342.500H1452M1067 366.500H1452M1067 390.500H1452M1067 438.500H1452M1067 462.500H1452M1067 486.500H1452M1067 510.500H1452M1067 534.500H1452M1067 558.500H1452M1067 582.500H1452M1067 606.500H1452M1067 630.500H1452M1067 654.500H1452M1067 678.500H1452M1067 702.500H1452M1067 726.500H1452M1067 750.500H1452M1067 774.500H1452" stroke="#555" stroke-dasharray="1 1"/>
<g clip-path="url(#tb)">
<use href="#bt" y="223"/><use href="#bt" y="247"/><use href="#bt" y="271"/>
<use href="#bt" y="439"/><use href="#bt" y="463"/><use href="#bt" y="487"/><use href="#bt" y="511"/><use href="#bt" y="535"/><use href="#bt" y="559"/><use href="#bt" y="583"/><use href="#bt" y="607"/><use href="#bt" y="631"/><use href="#bt" y="655"/><use href="#bt" y="679"/><use href="#bt" y="703"/><use href="#bt" y="727"/><use href="#bt" y="751"/><use href="#bt" y="775"/>
<text x="1077" y="239" textLength="170" lengthAdjust="spacingAndGlyphs">DEV_Количество работ...</text>
<text x="1077" y="263" textLength="170" lengthAdjust="spacingAndGlyphs">DEV_Количество работ...</text>
<text x="1077" y="287" textLength="170" lengthAdjust="spacingAndGlyphs">DEV_Количество работ...</text>
<text x="1069" y="312" textLength="145" lengthAdjust="spacingAndGlyphs">Изоляционный слой</text>
<text class="g" x="1077" y="335" textLength="106" lengthAdjust="spacingAndGlyphs">Общий размер</text>
<text class="g" x="1077" y="359" textLength="135" lengthAdjust="spacingAndGlyphs">Толщина изоляции</text>
<text class="g" x="1077" y="383" textLength="98" lengthAdjust="spacingAndGlyphs">Тип изоляции</text>
<text x="1069" y="408" textLength="53" lengthAdjust="spacingAndGlyphs">Прочее</text>
<text class="g" x="1077" y="431" textLength="66" lengthAdjust="spacingAndGlyphs">Дошибки</text>
<text x="1077" y="455" textLength="97" lengthAdjust="spacingAndGlyphs">МЕР_Порядок</text>
<text x="1077" y="479" textLength="83" lengthAdjust="spacingAndGlyphs">МЕР_Номер</text>
<text x="1077" y="503" textLength="161" lengthAdjust="spacingAndGlyphs">OV_Настройка клапана</text>
<text x="1077" y="527" textLength="170" lengthAdjust="spacingAndGlyphs">OV_Ручная настройка к...</text>
<text x="1077" y="551" textLength="67" lengthAdjust="spacingAndGlyphs">BDS_Class</text>
<text x="1077" y="575" textLength="170" lengthAdjust="spacingAndGlyphs">МЕР_Настройка клапана</text>
<text x="1077" y="599" textLength="154" lengthAdjust="spacingAndGlyphs">МЕР_Подключение СС</text>
<text x="1077" y="623" textLength="102" lengthAdjust="spacingAndGlyphs">BDS_ClassCode</text>
<text x="1077" y="647" textLength="102" lengthAdjust="spacingAndGlyphs">BDS_MaterialId</text>
<text x="1077" y="671" textLength="129" lengthAdjust="spacingAndGlyphs">BDS_MaterialName</text>
<text x="1077" y="695" textLength="122" lengthAdjust="spacingAndGlyphs">BDS_MaterialUnits</text>
<text x="1077" y="719" textLength="145" lengthAdjust="spacingAndGlyphs">BDS_MaterialQuantity</text>
<text x="1077" y="743" textLength="151" lengthAdjust="spacingAndGlyphs">BDS_MaterialThickness</text>
<text x="1077" y="767" textLength="67" lengthAdjust="spacingAndGlyphs">BDS_Mass</text>
<text x="1077" y="791" textLength="67" lengthAdjust="spacingAndGlyphs">BDS_Units</text>
<text class="g" x="1254" y="335" textLength="42" lengthAdjust="spacingAndGlyphs">15 мм</text>
<text class="g" x="1254" y="359" textLength="45" lengthAdjust="spacingAndGlyphs">0.0 мм</text>
<text class="g" x="1254" y="431" textLength="69" lengthAdjust="spacingAndGlyphs">135.00 мм</text>
<text x="1254" y="455" textLength="35" lengthAdjust="spacingAndGlyphs">20.00</text>
<text x="1254" y="551" textLength="99" lengthAdjust="spacingAndGlyphs">Не определён</text>
<text x="1254" y="623" textLength="99" lengthAdjust="spacingAndGlyphs">Не определён</text>
</g>
<path d="M1439 303l3-3 3 3M1439 307l3-3 3 3M1439 399l3-3 3 3M1439 403l3-3 3 3" fill="none" stroke="#222" stroke-width="1.200"/>
<rect x="1255" y="586" width="16" height="16" rx="2" fill="#bdbdbd"/><path d="M1259 594l3 3 5-5" fill="none" stroke="#eee" stroke-width="1.200"/>
<rect x="1459" y="488" width="6" height="57" fill="#8a8a8a"/>
<!-- footer -->
<rect x="1064" y="788" width="409" height="34" fill="#ececec"/>
<text x="1069" y="806" textLength="156" lengthAdjust="spacingAndGlyphs" style="fill:#0a6fc4;text-decoration:underline">Справка по свойствам</text>
<rect x="1385" y="791" width="84" height="24" rx="2" fill="#f2f2f2"/>
<text x="1387" y="809" textLength="79" lengthAdjust="spacingAndGlyphs" style="fill:#a0a0a0;font-size:14.500px">Применить</text>

<!-- annotations -->
<rect x="1048.500" y="528.500" width="334" height="110" fill="none" stroke="#d00f1a" stroke-width="3"/>
<path d="M822 358L1047 191" stroke="#d40d12" stroke-width="3"/>
<path d="M1055 186L1037 189L1045 201Z" fill="#d40d12"/>
</svg>
</body></html>
